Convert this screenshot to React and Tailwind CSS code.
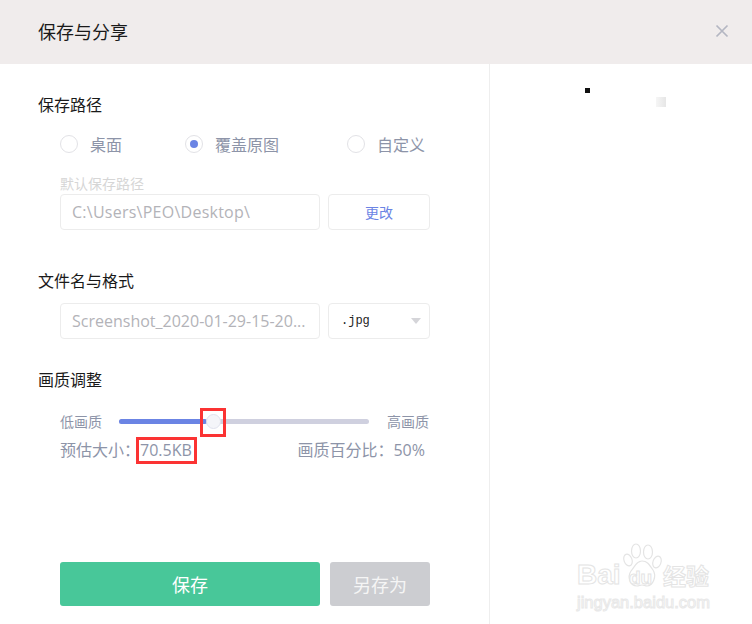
const cjk = 'font-["Microsoft_YaHei","Noto_Sans_CJK_SC","Liberation_Sans",sans-serif]';

function Radio({ label, checked, className }) {
    return (
        <div className={`flex items-center ${className}`}>
            <span className="w-[18px] h-[18px] rounded-full border border-[#e2e2e6] flex items-center justify-center">
                {checked && <span className="w-2 h-2 rounded-full bg-[#6b84e4]" />}
            </span>
            <span className="ml-3 text-base leading-6 text-[#8d94a8]">{label}</span>
        </div>
    );
}

function SectionTitle({ children, className = '' }) {
    return <h2 className={`text-base leading-6 font-normal text-[#1a1a1a] ${className}`}>{children}</h2>;
}

export default function App() {
    return (
        <div className={`relative w-[752px] h-[624px] bg-white overflow-hidden ${cjk}`}>
            {/* Header */}
            <div className="h-16 bg-[#f0ecec] flex items-center justify-between pl-[38px] pr-[23px]">
                <h1 className="text-lg font-normal text-[#1a1a1a] mb-[2px]">保存与分享</h1>
                <svg className="w-[14px] h-[14px] text-[#b4b6c2] mb-[2px]" viewBox="0 0 14 14" fill="none" stroke="currentColor" strokeWidth="1.7">
                    <path d="M1.5 1.5l11 11M12.5 1.5l-11 11" />
                </svg>
            </div>

            <div className="flex h-[560px]">
                {/* Left panel */}
                <div className="w-[490px] border-r border-[#eeeeee] pl-[38px] pr-[59px] pt-[28px]">
                    <SectionTitle>保存路径</SectionTitle>
                    <div className="flex mt-[16px] ml-[22px] h-6">
                        <Radio label="桌面" className="w-[125px]" />
                        <Radio label="覆盖原图" checked className="w-[162px]" />
                        <Radio label="自定义" />
                    </div>

                    <div className="ml-[22px] mt-[20px] text-sm leading-[14px] text-[#d6d6d6] h-[11px]">默认保存路径</div>
                    <div className="flex gap-2 ml-[22px] mt-[7px]">
                        <div className="w-[260px] h-9 border border-[#ececec] rounded-sm pl-[11px] flex items-center text-base tracking-[0.25px] text-[#b3b3b8] font-['Open_Sans',sans-serif]">
                            C:\Users\PEO\Desktop\
                        </div>
                        <div className="w-[102px] h-9 border border-[#ececec] rounded-sm flex items-center justify-center text-sm text-[#6b84e4]">
                            更改
                        </div>
                    </div>

                    <SectionTitle className="mt-[38px]">文件名与格式</SectionTitle>
                    <div className="flex gap-2 ml-[22px] mt-[11px]">
                        <div className="w-[260px] h-9 border border-[#ececec] rounded-sm pl-[11px] flex items-center text-base text-[#b3b3b8] font-['Open_Sans',sans-serif] whitespace-nowrap overflow-hidden">
                            Screenshot_2020-01-29-15-20...
                        </div>
                        <div className="w-[102px] h-9 border border-[#ececec] rounded-sm pl-3 pr-2 flex items-center justify-between text-xs text-[#222222] font-['Liberation_Mono',monospace]">
                            .jpg
                            <span className="w-0 h-0 border-x-[5px] border-x-transparent border-t-[6px] border-t-[#d5d5d9]" />
                        </div>
                    </div>

                    <SectionTitle className="mt-[28px]">画质调整</SectionTitle>

                    <div className="ml-[22px] mt-[20px] flex items-center text-sm leading-5 text-[#8d94a8]">
                        <span>低画质</span>
                        <div className="relative w-[250px] h-[5px] ml-[17px] mr-[18px] rounded-full bg-[#cfd0df]">
                            <div className="h-full w-[88px] rounded-full bg-[#6b84e4]" />
                            <span className="absolute left-[87px] top-[-5px] w-[15px] h-[15px] rounded-full bg-[#f4f5f9] border border-[#e0e2ee]" />
                        </div>
                        <span>高画质</span>
                    </div>

                    <div className="ml-[22px] mt-[6px] flex w-[365px] justify-between text-base leading-6 text-[#8d94a8]">
                        <span>预估大小：<span className="font-['Open_Sans',sans-serif]">70.5KB</span></span>
                        <span>画质百分比：<span className="font-['Open_Sans',sans-serif]">50%</span></span>
                    </div>

                    <div className="flex gap-[10px] ml-[22px] mt-[100px]">
                        <button className="w-[260px] h-[44px] rounded-[3px] bg-[#48c799] text-white text-lg">保存</button>
                        <button className="w-[100px] h-[44px] rounded-[3px] bg-[#cccdd1] text-[#f5f5f5] text-lg">另存为</button>
                    </div>
                </div>
                <div className="flex-1" />
            </div>

            {/* Annotation boxes */}
            <div className="absolute left-[200px] top-[408px] w-[26px] h-[29px] border-[3px] border-[#fb3333]" />
            <div className="absolute left-[136px] top-[437px] w-[61px] h-[27px] border-[3px] border-[#fb3333]" />

            {/* Stray pixels */}
            <div className="absolute left-[585px] top-[88px] w-[5px] h-[5px] bg-[#111111]" />
            <div className="absolute left-[656px] top-[97px] w-[10px] h-[10px] bg-gradient-to-r from-[#f6f6f6] to-[#e6e6e6]" />

            {/* Watermark */}
            <div className="absolute left-[577px] top-[543px] w-[140px] h-[70px] select-none">
                <svg className="absolute left-[45px] top-0 w-[42px] h-[46px]" viewBox="0 0 42 46" fill="white" stroke="#e4e4e4" strokeWidth="1.2">
                    <ellipse cx="6" cy="17" rx="4" ry="6" transform="rotate(-20 6 17)" />
                    <ellipse cx="14" cy="8" rx="4.5" ry="7" />
                    <ellipse cx="26" cy="9" rx="4.5" ry="7" />
                    <ellipse cx="35" cy="19" rx="4" ry="6" transform="rotate(20 35 19)" />
                    <path d="M20 18c5 0 7 3 11 9 4 6 0 16-6 16-2 0-3-1-5-1s-3 1-5 1c-7 0-10-9-6-15 4-5 6-10 11-10z" />
                </svg>
                <span className="absolute left-0 top-[16px] text-[28px] leading-8 font-bold font-['Liberation_Sans',sans-serif] text-white [-webkit-text-stroke:1px_#e4e4e4]">Bai</span>
                <span className="absolute left-[52px] top-[25px] text-[19px] leading-5 font-bold font-['Liberation_Sans',sans-serif] text-white [-webkit-text-stroke:1px_#e4e4e4]">du</span>
                <span className="absolute left-[86px] top-[16px] text-[23px] leading-8 font-bold text-white [-webkit-text-stroke:1px_#e4e4e4]">经验</span>
                <span className="absolute left-0 top-[49px] text-[16.5px] leading-5 whitespace-nowrap font-['Liberation_Sans',sans-serif] text-white [-webkit-text-stroke:1px_#e8e8e8]">jingyan.baidu.com</span>
            </div>
        </div>
    );
}
